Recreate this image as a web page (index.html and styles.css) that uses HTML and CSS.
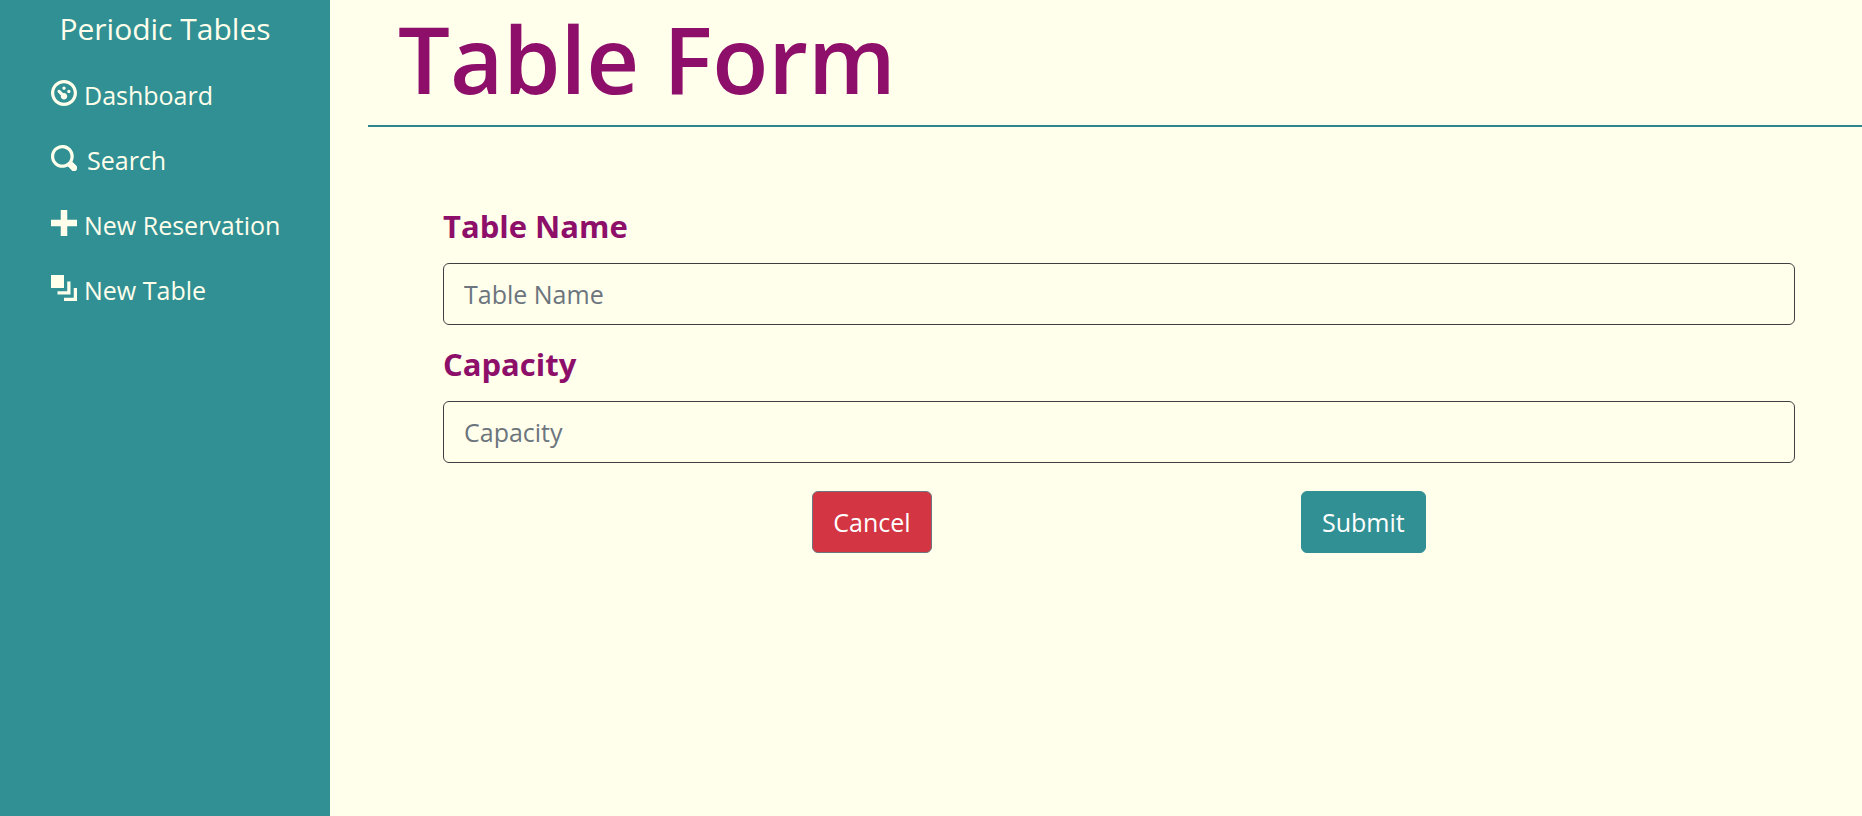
FILE: index.html
```html
<!DOCTYPE html>
<html lang="en">
<head>
<meta charset="utf-8">
<meta name="viewport" content="width=device-width, initial-scale=1">
<title>Periodic Tables</title>
<link rel="stylesheet" href="styles.css">
</head>
<body>
<div class="layout">
  <nav class="sidebar">
    <a class="brand" href="#">Periodic Tables</a>
    <ul class="menu">
      <li><a class="menu-link" href="#"><svg class="icon" viewBox="0 0 8 8" aria-hidden="true"><path d="M4 0c-2.200 0-4 1.800-4 4s1.800 4 4 4 4-1.800 4-4-1.800-4-4-4zm0 1c1.660 0 3 1.340 3 3s-1.340 3-3 3-3-1.340-3-3 1.340-3 3-3zm0 1c-.28 0-.5.22-.5.5s.22.5.5.5.5-.22.5-.5-.22-.5-.5-.5zm-1.660 1a.5.5 0 0 0-.19.84l.91.91c-.02.08-.06.16-.06.25 0 .55.45 1 1 1s1-.45 1-1-.45-1-1-1c-.09 0-.17.04-.25.06l-.91-.91a.5.5 0 0 0-.44-.16.5.5 0 0 0-.06 0zm3.160 0c-.28 0-.5.22-.5.5s.22.5.5.5.5-.22.5-.5-.22-.5-.5-.5z"/></svg><span>Dashboard</span></a></li>
      <li><a class="menu-link menu-link-wide" href="#"><svg class="icon" viewBox="0 0 8 8" aria-hidden="true"><path d="M3.500 0c-1.930 0-3.500 1.570-3.500 3.500s1.570 3.500 3.500 3.500c.59 0 1.170-.14 1.660-.41a1 1 0 0 0 .13.13l1 1a1.020 1.020 0 1 0 1.440-1.440l-1-1a1 1 0 0 0-.16-.13c.27-.49.44-1.060.44-1.660 0-1.930-1.550-3.500-3.500-3.500zm0 1c1.390 0 2.500 1.110 2.500 2.500 0 .66-.24 1.270-.66 1.720-.01.01-.02.02-.03.03a1 1 0 0 0-.13.13c-.44.4-1.040.63-1.690.63-1.390 0-2.500-1.110-2.500-2.500s1.110-2.500 2.500-2.500z"/></svg><span>Search</span></a></li>
      <li><a class="menu-link" href="#"><svg class="icon" viewBox="0 0 8 8" aria-hidden="true"><path d="M3 0v3h-3v2h3v3h2v-3h3v-2h-3v-3h-2z"/></svg><span>New Reservation</span></a></li>
      <li><a class="menu-link" href="#"><svg class="icon" viewBox="0 0 8 8" aria-hidden="true"><path d="M0 0v4h4v-4h-4zm5 2v3h-3v1h4v-4h-1zm2 2v3h-3v1h4v-4h-1z"/></svg><span>New Table</span></a></li>
    </ul>
  </nav>
  <main class="content">
    <h1 class="title">Table Form</h1>
    <form class="form">
      <div class="field">
        <label class="label" for="table_name">Table Name</label>
        <input class="input" id="table_name" name="table_name" type="text" placeholder="Table Name">
      </div>
      <div class="field">
        <label class="label" for="capacity">Capacity</label>
        <input class="input" id="capacity" name="capacity" type="text" placeholder="Capacity">
      </div>
      <div class="actions">
        <button class="button button-cancel" type="button">Cancel</button>
        <button class="button button-submit" type="submit">Submit</button>
      </div>
    </form>
  </main>
</div>
</body>
</html>
```
FILE: styles.css
```css
* {
  box-sizing: border-box;
}

body {
  margin: 0;
  background: #ffffec;
  font-family: "Segoe UI", "Open Sans", "Noto Sans", sans-serif;
  font-size: 25px;
  line-height: 40px;
}

.layout {
  display: flex;
  min-height: 100vh;
}

.sidebar {
  flex: 0 0 330px;
  padding-top: 5px;
  background: #319094;
}

.brand {
  display: block;
  color: #ffffec;
  font-size: 30px;
  line-height: 48px;
  text-align: center;
  text-decoration: none;
}

.menu {
  display: grid;
  gap: 25px;
  margin: 0;
  padding: 22px 0 0 51px;
  list-style: none;
}

.menu-link {
  display: flex;
  align-items: flex-start;
  gap: 7px;
  color: #ffffec;
  text-decoration: none;
}

.menu-link-wide {
  gap: 10px;
}

.icon {
  width: 26px;
  height: 26px;
  margin-top: 5px;
  fill: currentColor;
}

.content {
  flex: 1;
  padding-left: 38px;
}

.title {
  margin: 0;
  padding: 0 30px 8px;
  border-bottom: 2px solid #30868f;
  color: #8d0f69;
  font-size: 92px;
  font-weight: 600;
  line-height: 117px;
}

.form {
  display: grid;
  gap: 14px;
  padding: 74px 67px 0 75px;
}

.field {
  display: grid;
  gap: 12px;
}

.label {
  color: #8d0f69;
  font-size: 31px;
  font-weight: 700;
  line-height: 50px;
}

.input {
  width: 100%;
  height: 62px;
  padding: 0 20px;
  border: 1px solid #404044;
  border-radius: 6px;
  background: transparent;
  color: #212529;
  font: inherit;
}

.input::placeholder {
  color: #6c757d;
  opacity: 1;
}

.actions {
  display: flex;
  justify-content: space-evenly;
  padding-top: 14px;
}

.button {
  height: 62px;
  padding: 0 20px;
  border: 1px solid #319094;
  border-radius: 6px;
  color: #ffffff;
  font: inherit;
}

.button-cancel {
  border-color: #6c757d;
  background: #d33543;
}

.button-submit {
  background: #319094;
}
```
